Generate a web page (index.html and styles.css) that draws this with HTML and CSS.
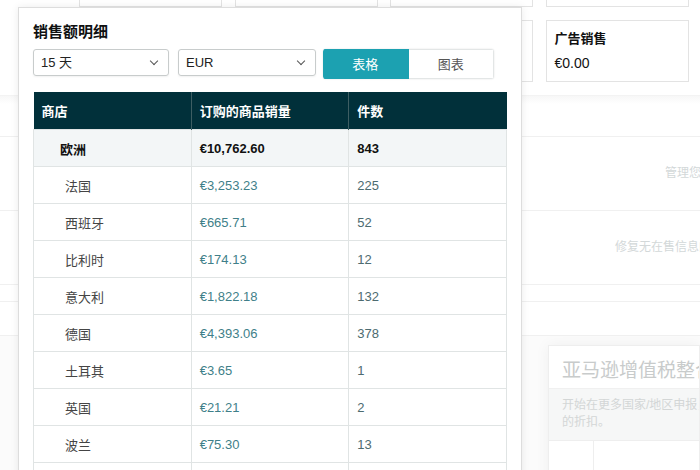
FILE: index.html
```html
<!DOCTYPE html>
<html lang="zh-CN">
<head>
    <meta charset="UTF-8">
    <meta name="viewport" content="width=device-width, initial-scale=1.0">
    <title>销售额明细</title>
    <link rel="stylesheet" href="styles.css">
</head>
<body>
    <div class="dash">
        <div class="card-row first">
            <div class="card"></div>
            <div class="card"></div>
            <div class="card"></div>
            <div class="card"></div>
        </div>
        <div class="card-row second">
            <div class="card"></div>
            <div class="card"></div>
            <div class="card"></div>
            <div class="card stat">
                <div class="stat-title">广告销售</div>
                <div class="stat-value">€0.00</div>
            </div>
        </div>

        <div class="panel">
            <div class="panel-row head"></div>
            <div class="panel-row tall"><span class="muted one">管理您的库存</span></div>
            <div class="panel-row tall"><span class="muted two">修复无在售信息的亚马逊库存</span></div>
            <div class="panel-row thin"></div>
            <div class="panel-row"></div>
        </div>

        <div class="promo">
            <div class="promo-card">
                <div class="promo-title">亚马逊增值税整合服务</div>
                <div class="promo-note">开始在更多国家/地区申报，享受增值税服务<br>的折扣。</div>
                <div class="promo-foot"><span></span></div>
            </div>
        </div>
    </div>

    <div class="popup">
        <h2 class="popup-title">销售额明细</h2>
        <div class="controls">
            <div class="select w1">15 天<span class="chev"></span></div>
            <div class="select w2">EUR<span class="chev"></span></div>
            <div class="toggle">
                <span class="seg on">表格</span>
                <span class="seg">图表</span>
            </div>
        </div>

        <table class="sales">
            <thead>
                <tr><th>商店</th><th>订购的商品销量</th><th>件数</th></tr>
            </thead>
            <tbody>
                <tr class="group"><td>欧洲</td><td>€10,762.60</td><td>843</td></tr>
                <tr><td>法国</td><td class="amt">€3,253.23</td><td class="qty">225</td></tr>
                <tr><td>西班牙</td><td class="amt">€665.71</td><td class="qty">52</td></tr>
                <tr><td>比利时</td><td class="amt">€174.13</td><td class="qty">12</td></tr>
                <tr><td>意大利</td><td class="amt">€1,822.18</td><td class="qty">132</td></tr>
                <tr><td>德国</td><td class="amt">€4,393.06</td><td class="qty">378</td></tr>
                <tr><td>土耳其</td><td class="amt">€3.65</td><td class="qty">1</td></tr>
                <tr><td>英国</td><td class="amt">€21.21</td><td class="qty">2</td></tr>
                <tr><td>波兰</td><td class="amt">€75.30</td><td class="qty">13</td></tr>
                <tr><td>瑞典</td><td class="amt">€23.13</td><td class="qty">28</td></tr>
            </tbody>
        </table>
    </div>
</body>
</html>
```

FILE: styles.css
```css
body {
    font-family: "Liberation Sans", "Noto Sans CJK SC", sans-serif;
    margin: 0;
    width: 700px;
    height: 470px;
    overflow: hidden;
    background-color: #ffffff;
    position: relative;
    color: #333333;
}
.dash {
    position: relative;
}
.card-row {
    display: grid;
    grid-template-columns: repeat(4, 143px);
    column-gap: 12.5px;
    padding-left: 79px;
}
.card-row.first {
    margin-top: -50px;
    height: 57px;
}
.card-row.second {
    margin-top: 13px;
    height: 58px;
}
.card {
    border: 1px solid #e3e3e3;
    background-color: #ffffff;
    box-sizing: border-box;
}
.stat {
    padding: 9px 8px;
}
.stat-title {
    font-size: 13px;
    font-weight: bold;
    color: #111111;
    line-height: 18px;
}
.stat-value {
    font-size: 14px;
    color: #111111;
    margin-top: 6px;
    line-height: 18px;
}
.panel {
    margin-top: 17px;
    border-top: 1px solid #f3f3f3;
    background: linear-gradient(#f7f7f7, #ffffff 8px);
}
.panel-row {
    height: 33px;
    border-bottom: 1px solid #f0f0f0;
    font-size: 12px;
    position: relative;
}
.panel-row.head {
    height: 33px;
    margin-top: 7px;
}
.panel-row.tall {
    height: 73px;
    line-height: 73px;
}
.panel-row.thin {
    height: 16px;
}
.muted {
    color: #d3d8d9;
    display: block;
    white-space: nowrap;
}
.muted.one {
    padding-left: 665px;
}
.muted.two {
    padding-left: 615px;
}
.promo {
    padding: 9px 0 0 548px;
    background-color: #fbfbfb;
}
.promo-card {
    background-color: #ffffff;
    border: 1px solid #eeeeee;
    box-shadow: 0 0 14px rgba(0,0,0,0.05);
    height: 140px;
    overflow: hidden;
}
.promo-title {
    font-size: 19px;
    color: #c8cbcb;
    padding: 9px 0 0 13px;
    height: 33px;
    white-space: nowrap;
}
.promo-note {
    background-color: #f6f7f7;
    border-top: 1px solid #f0f0f0;
    border-bottom: 1px solid #eeeeee;
    font-size: 12px;
    line-height: 17px;
    color: #d3d6d6;
    padding: 8px 12px 9px 13px;
    height: 34px;
    white-space: nowrap;
}
.promo-foot {
    height: 60px;
}
.promo-foot span {
    display: block;
    width: 44px;
    height: 60px;
    border-right: 1px solid #eeeeee;
}

/* 弹出层 */
.popup {
    position: absolute;
    left: 18px;
    top: 7px;
    width: 474px;
    height: 480px;
    padding: 14px 14px 0 14px;
    background-color: #ffffff;
    border: 1px solid #dddddd;
    box-shadow: 0 0 8px rgba(0,0,0,0.08);
}
.popup-title {
    font-size: 15px;
    font-weight: bold;
    color: #0f1111;
    margin: 0;
    line-height: 20px;
    height: 27px;
}
.controls {
    display: flex;
    align-items: flex-start;
    gap: 9px;
}
.select {
    position: relative;
    height: 27px;
    line-height: 25px;
    box-sizing: border-box;
    border: 1px solid #c8cccc;
    border-radius: 3px;
    padding-left: 7px;
    font-size: 13px;
    color: #222222;
    box-shadow: 0 1px 2px rgba(0,0,0,0.06);
}
.select.w1 {
    width: 136px;
}
.select.w2 {
    width: 138px;
}
.chev {
    position: absolute;
    right: 11px;
    top: 8px;
    width: 5px;
    height: 5px;
    border-right: 1.3px solid #555555;
    border-bottom: 1.3px solid #555555;
    transform: rotate(45deg);
}
.toggle {
    display: flex;
    width: 171px;
    height: 30px;
    border-radius: 3px;
    overflow: hidden;
    box-shadow: 0 0 2px rgba(0,0,0,0.12);
    margin-left: -2px;
}
.seg {
    flex: 1;
    text-align: center;
    line-height: 30px;
    font-size: 13px;
    color: #555555;
    background-color: #ffffff;
    border: 1px solid #e3e6e6;
    border-left: none;
}
.seg.on {
    background-color: #1ca1b1;
    color: #ffffff;
    border-color: #1ca1b1;
}
.sales {
    margin-top: 13px;
    width: 474px;
    border-collapse: collapse;
    table-layout: fixed;
    font-size: 13px;
}
.sales th {
    background-color: #01303a;
    color: #ffffff;
    font-weight: bold;
    text-align: left;
    height: 37px;
    padding: 0 8px;
    border-right: 1px solid #3e5e63;
}
.sales th:last-child {
    border-right: none;
}
.sales td {
    height: 36px;
    padding: 0 8px;
    border: 1px solid #e0e4e4;
    color: #444444;
}
.sales td:first-child {
    padding-left: 31px;
}
.sales .group td {
    background-color: #f3f6f7;
    font-weight: bold;
    color: #111111;
}
.sales .group td:first-child {
    padding-left: 26px;
}
.sales .amt {
    color: #3f7f89;
}
.sales .qty {
    color: #4d6b70;
}
```
